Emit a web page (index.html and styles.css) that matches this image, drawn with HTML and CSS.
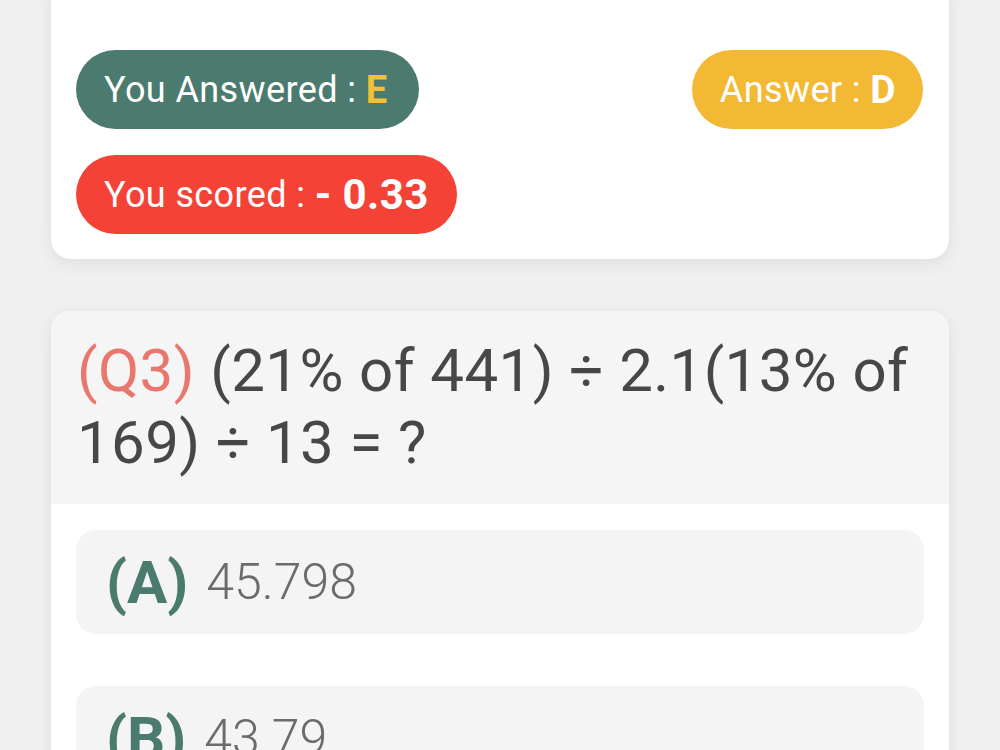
FILE: index.html
```html
<!DOCTYPE html>
<html lang="en">

<head>
    <meta charset="UTF-8">
    <meta name="viewport" content="width=device-width, initial-scale=1.0">
    <title>Quiz Review</title>
    <link rel="stylesheet" href="styles.css">
</head>

<body>

    <div class="result-card">
        <div class="pill-row">
            <span class="pill answered">You Answered : <b class="mark">E</b></span>
            <span class="pill correct">Answer : <b>D</b></span>
        </div>
        <div class="pill-row">
            <span class="pill scored">You scored : <b class="score">- 0.33</b></span>
        </div>
    </div>

    <div class="question-card">
        <div class="question">
            <span class="q-no">(Q3)</span> (21% of 441) ÷ 2.1(13% of 169) ÷ 13 = ?
        </div>
        <div class="options">
            <div class="option"><span class="letter">(A)</span> <span class="value">45.798</span></div>
            <div class="option"><span class="letter">(B)</span> <span class="value">43.79</span></div>
        </div>
    </div>

</body>

</html>
```

FILE: styles.css
```css
body {
    margin: 0;
    padding: 0 51px;
    background: #f0f0f0;
    font-family: 'Roboto', 'Noto Sans', sans-serif;
    overflow: hidden;
}

.result-card {
    margin-top: -30px;
    padding: 80px 26px 25px 25px;
    background: #ffffff;
    border-radius: 20px;
    box-shadow: 0 4px 18px rgba(0, 0, 0, 0.08);
    display: flex;
    flex-direction: column;
    gap: 26px;
}

.pill-row {
    display: flex;
    justify-content: space-between;
}

.pill {
    display: inline-flex;
    align-items: center;
    height: 79px;
    padding: 0 28px;
    border-radius: 40px;
    color: #ffffff;
    font-size: 36px;
    letter-spacing: 0.4px;
    white-space: pre;
}

.pill b {
    font-weight: 700;
}

.answered {
    background: #4b7b6f;
    padding: 0 31px 0 28px;
}

.mark {
    color: #f2c136;
    font-size: 38px;
}

.correct {
    background: #f4b934;
    padding: 0 27px 0 28px;
}

.correct b {
    font-size: 39px;
}

.scored {
    background: #f44336;
}

.score {
    font-size: 42px;
}

.question-card {
    margin-top: 52px;
    background: #ffffff;
    border-radius: 20px;
    box-shadow: 0 4px 18px rgba(0, 0, 0, 0.08);
    overflow: hidden;
}

.question {
    background: #f5f5f5;
    padding: 24px 26px 25px 26px;
    font-size: 60px;
    line-height: 72px;
    letter-spacing: 0.4px;
    color: #474747;
}

.q-no {
    color: #e8776d;
}

.options {
    padding: 26px 25px;
    display: flex;
    flex-direction: column;
    gap: 52px;
}

.option {
    background: #f4f4f4;
    border-radius: 20px;
    height: 104px;
    padding: 0 30px;
    display: flex;
    align-items: center;
    gap: 18px;
}

.letter {
    color: #4b7b6f;
    font-weight: 700;
    font-size: 60px;
}

.value {
    color: #6b6b6b;
    font-weight: 300;
    font-size: 50px;
}
```
